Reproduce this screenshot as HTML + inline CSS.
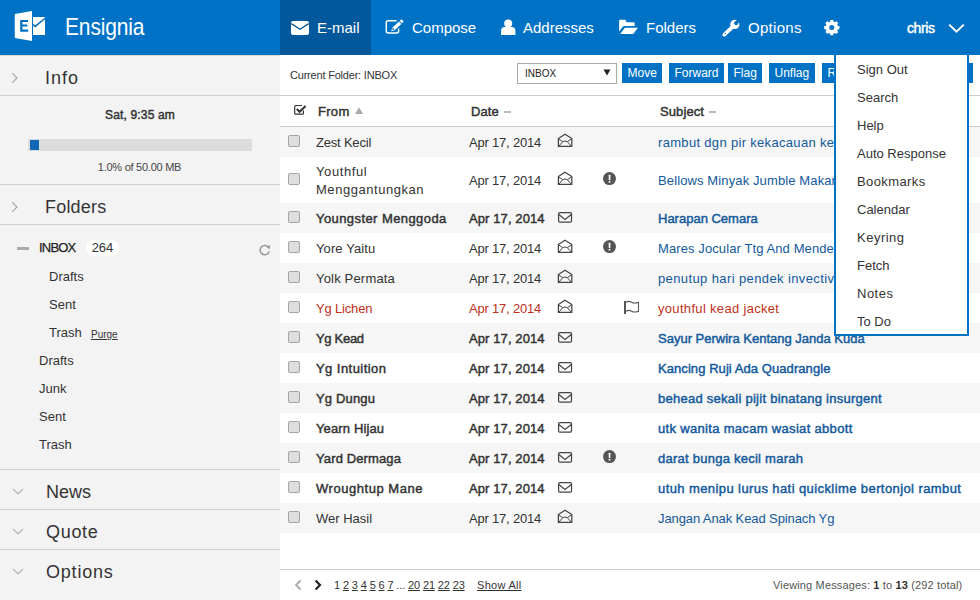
<!DOCTYPE html>
<html><head><meta charset="utf-8"><style>
html,body{margin:0;padding:0;width:980px;height:600px;overflow:hidden;background:#fff}
body{position:relative;font-family:"Liberation Sans",sans-serif}
.a{position:absolute;display:block}
.t{position:absolute;white-space:nowrap}
u{text-decoration:underline}
</style></head><body>
<div class="a" style="left:0px;top:0px;width:980px;height:55px;background:#0072c6"></div>
<div class="a" style="left:280px;top:0px;width:91px;height:55px;background:#03579b"></div>
<svg class="a" style="left:10px;top:5px" width="40" height="40" viewBox="0 0 40 40"><path d="M4.8 9 L22 6 L22 36 L4.8 33 Z" fill="#fff"/><path d="M10.2 15 H18 V17 H12.4 V19.6 H17.4 V21.5 H12.4 V24.6 H18.2 V26.7 H10.2 Z" fill="#0072c6"/><path d="M23 12 H35 V30 H23 Z" fill="#fff"/><path d="M22.6 19.2 L25.2 21.4 L35.4 13" fill="none" stroke="#0072c6" stroke-width="1.5"/></svg>
<div class="t" style="left:65px;top:13px;font-size:21px;line-height:30px;font-weight:normal;color:#fff;letter-spacing:-0.15px;transform:scaleY(1.13);transform-origin:0 22px">Ensignia</div>
<svg class="a" style="left:291px;top:21px" width="18" height="14" viewBox="0 0 18 14"><rect x="0" y="0" width="18" height="14" rx="2" fill="#fff"/><path d="M0.3 2.6 L9 8.2 L17.7 2.6" fill="none" stroke="#03579b" stroke-width="1.3"/></svg>
<div class="t" style="left:317px;top:18px;font-size:15px;line-height:20px;font-weight:normal;color:#fff;">E-mail</div>
<svg class="a" style="left:382px;top:16px" width="24" height="22" viewBox="0 0 24 22"><path d="M16.6 12.6 V15 Q16.6 16.9 14.7 16.9 H6.2 Q4.3 16.9 4.3 15 V6.7 Q4.3 4.8 6.2 4.8 H14.6" fill="none" stroke="#fff" stroke-width="1.5"/><path d="M9.2 15.2 L10.3 11.8 L17 5.6 L19.3 8 L12.6 14.2 Z" fill="#fff"/><path d="M17.7 4.9 L18.9 3.8 Q19.6 3.2 20.3 3.9 L21.2 4.8 Q21.8 5.5 21.2 6.1 L20 7.2 Z" fill="#fff"/><circle cx="11.2" cy="13" r="0.9" fill="#0072c6"/></svg>
<div class="t" style="left:412px;top:18px;font-size:15px;line-height:20px;font-weight:normal;color:#fff;">Compose</div>
<svg class="a" style="left:496px;top:16px" width="24" height="22" viewBox="0 0 24 22"><circle cx="12.2" cy="7.4" r="4" fill="#fff"/><path d="M5.1 19 V14.5 Q5.1 11 8.6 11 H15.9 Q19.4 11 19.4 14.5 V19 Z" fill="#fff"/></svg>
<div class="t" style="left:523px;top:18px;font-size:15px;line-height:20px;font-weight:normal;color:#fff;">Addresses</div>
<svg class="a" style="left:616px;top:16px" width="24" height="22" viewBox="0 0 24 22"><path d="M3.1 15.6 V5 Q3.1 3.85 4.3 3.85 H9.3 L10.6 6.2 H17.5 Q18.7 6.2 18.7 7.4 V9.9 H8.4 Q7.6 9.9 7 10.6 Z" fill="#fff"/><path d="M4.2 18 H17.2 L22 11.7 H8.9 Z" fill="#fff"/></svg>
<div class="t" style="left:646px;top:18px;font-size:15px;line-height:20px;font-weight:normal;color:#fff;">Folders</div>
<svg class="a" style="left:719px;top:16px" width="24" height="24" viewBox="0 0 24 24"><path d="M5.3 18.6 L13.6 10.9" stroke="#fff" stroke-width="3.8" stroke-linecap="round"/><circle cx="15.8" cy="8.4" r="4.6" fill="#fff"/><path d="M14.6 7.2 L18.8 3 L21 5.3 L16.9 9.4 Z" fill="#0072c6"/><circle cx="17.4" cy="7.0" r="1.9" fill="#0072c6"/><circle cx="6.3" cy="17.5" r="0.75" fill="#0072c6"/></svg>
<div class="t" style="left:748px;top:18px;font-size:15px;line-height:20px;font-weight:normal;color:#fff;letter-spacing:0.3px">Options</div>
<svg class="a" style="left:820px;top:16px" width="24" height="24" viewBox="0 0 24 24"><path d="M17.58 10.00 L19.44 10.05 L19.44 13.15 L17.58 13.20 L17.02 14.56 L18.30 15.91 L16.11 18.10 L14.76 16.82 L13.40 17.38 L13.35 19.24 L10.25 19.24 L10.20 17.38 L8.84 16.82 L7.49 18.10 L5.30 15.91 L6.58 14.56 L6.02 13.20 L4.16 13.15 L4.16 10.05 L6.02 10.00 L6.58 8.64 L5.30 7.29 L7.49 5.10 L8.84 6.38 L10.20 5.82 L10.25 3.96 L13.35 3.96 L13.40 5.82 L14.76 6.38 L16.11 5.10 L18.30 7.29 L17.02 8.64 Z" fill="#fff"/><circle cx="11.8" cy="11.6" r="6.2" fill="#fff"/><circle cx="11.8" cy="11.6" r="2.5" fill="#0072c6"/></svg>
<div class="t" style="left:907px;top:18px;font-size:14px;line-height:20px;font-weight:normal;color:#fff;-webkit-text-stroke-width:0.45px;letter-spacing:-0.4px">chris</div>
<svg class="a" style="left:946px;top:20px" width="20" height="16" viewBox="0 0 20 16"><path d="M3.2 4.6 L10.5 11.6 L17.8 4.6" fill="none" stroke="#fff" stroke-width="2"/></svg>
<div class="a" style="left:0px;top:55px;width:280px;height:545px;background:#f3f3f3"></div>
<div class="a" style="left:0px;top:55px;width:280px;height:1px;background:#d8d8d8"></div>
<svg class="a" style="left:10px;top:72px" width="10" height="12" viewBox="0 0 10 12"><path d="M2.2 1.2 L7 6 L2.2 10.8" fill="none" stroke="#a6a6a6" stroke-width="1.15"/></svg>
<div class="t" style="left:45px;top:68px;font-size:18px;line-height:20px;font-weight:normal;color:#333;letter-spacing:1px">Info</div>
<div class="a" style="left:0px;top:95px;width:280px;height:1px;background:#cfcfcf"></div>
<div class="t" style="left:0px;top:105px;font-size:12px;line-height:20px;font-weight:normal;color:#333;-webkit-text-stroke-width:0.45px;width:280px;text-align:center;letter-spacing:0.17px">Sat, 9:35 am</div>
<div class="a" style="left:28px;top:139px;width:224px;height:12px;background:#dcdcdc"></div>
<div class="a" style="left:30px;top:140px;width:9px;height:10px;background:#0f67b5"></div>
<div class="t" style="left:0px;top:157px;font-size:11px;line-height:20px;font-weight:normal;color:#444;width:279px;text-align:center;letter-spacing:-0.25px">1.0% of 50.00 MB</div>
<div class="a" style="left:0px;top:184px;width:280px;height:1px;background:#cfcfcf"></div>
<svg class="a" style="left:10px;top:201px" width="10" height="12" viewBox="0 0 10 12"><path d="M2.2 1.2 L7 6 L2.2 10.8" fill="none" stroke="#a6a6a6" stroke-width="1.15"/></svg>
<div class="t" style="left:45px;top:197px;font-size:18px;line-height:20px;font-weight:normal;color:#333;letter-spacing:0.2px">Folders</div>
<div class="a" style="left:0px;top:224px;width:280px;height:1px;background:#cfcfcf"></div>
<div class="a" style="left:17px;top:247px;width:12px;height:3px;background:#aaa"></div>
<div class="t" style="left:39px;top:238px;font-size:13px;line-height:20px;font-weight:normal;color:#222;letter-spacing:-0.8px;-webkit-text-stroke:0.25px #222">INBOX</div>
<div class="a" style="left:86px;top:240px;width:33px;height:16px;background:#fff;border-radius:8px"></div>
<div class="t" style="left:86px;top:238px;font-size:13px;line-height:20px;font-weight:normal;color:#333;width:33px;text-align:center">264</div>
<svg class="a" style="left:258px;top:243px" width="14" height="14" viewBox="0 0 14 14"><path d="M10.3 4.2 A4.6 4.6 0 1 0 11.2 8.4" fill="none" stroke="#999" stroke-width="1.6"/><path d="M8.3 3.2 L12.2 2.2 L11.6 6.4 Z" fill="#999"/></svg>
<div class="t" style="left:49px;top:267px;font-size:13px;line-height:20px;font-weight:normal;color:#333;">Drafts</div>
<div class="t" style="left:49px;top:295px;font-size:13px;line-height:20px;font-weight:normal;color:#333;">Sent</div>
<div class="t" style="left:49px;top:323px;font-size:13px;line-height:20px;font-weight:normal;color:#333;">Trash</div>
<div class="t" style="left:91px;top:325px;font-size:10px;line-height:20px;font-weight:normal;color:#333;text-decoration:underline">Purge</div>
<div class="t" style="left:39px;top:351px;font-size:13px;line-height:20px;font-weight:normal;color:#333;">Drafts</div>
<div class="t" style="left:39px;top:379px;font-size:13px;line-height:20px;font-weight:normal;color:#333;">Junk</div>
<div class="t" style="left:39px;top:407px;font-size:13px;line-height:20px;font-weight:normal;color:#333;">Sent</div>
<div class="t" style="left:39px;top:435px;font-size:13px;line-height:20px;font-weight:normal;color:#333;">Trash</div>
<div class="a" style="left:0px;top:469px;width:280px;height:1px;background:#cfcfcf"></div>
<svg class="a" style="left:12px;top:488px" width="12" height="8" viewBox="0 0 12 8"><path d="M1.2 1.2 L6 5.8 L10.8 1.2" fill="none" stroke="#a6a6a6" stroke-width="1.15"/></svg>
<div class="t" style="left:46px;top:482px;font-size:18px;line-height:20px;font-weight:normal;color:#333;">News</div>
<div class="a" style="left:0px;top:509px;width:280px;height:1px;background:#cfcfcf"></div>
<svg class="a" style="left:12px;top:528px" width="12" height="8" viewBox="0 0 12 8"><path d="M1.2 1.2 L6 5.8 L10.8 1.2" fill="none" stroke="#a6a6a6" stroke-width="1.15"/></svg>
<div class="t" style="left:46px;top:522px;font-size:18px;line-height:20px;font-weight:normal;color:#333;letter-spacing:0.7px">Quote</div>
<div class="a" style="left:0px;top:549px;width:280px;height:1px;background:#cfcfcf"></div>
<svg class="a" style="left:12px;top:568px" width="12" height="8" viewBox="0 0 12 8"><path d="M1.2 1.2 L6 5.8 L10.8 1.2" fill="none" stroke="#a6a6a6" stroke-width="1.15"/></svg>
<div class="t" style="left:46px;top:562px;font-size:18px;line-height:20px;font-weight:normal;color:#333;letter-spacing:0.8px">Options</div>
<div class="a" style="left:280px;top:55px;width:700px;height:545px;background:#fff"></div>
<div class="t" style="left:290px;top:65px;font-size:11px;line-height:20px;font-weight:normal;color:#333;letter-spacing:-0.2px">Current Folder: INBOX</div>
<div class="a" style="left:517px;top:63px;width:100px;height:21px;background:#fff;border:1px solid #aaa;box-sizing:border-box"></div>
<div class="t" style="left:525px;top:64px;font-size:10px;line-height:20px;font-weight:normal;color:#222;">INBOX</div>
<svg class="a" style="left:603px;top:69px" width="8" height="7" viewBox="0 0 8 7"><path d="M0.5 0.5 H7.5 L4 6.5 Z" fill="#222"/></svg>
<div class="a" style="left:622px;top:63px;width:40px;height:20px;background:#0072c6"></div>
<div class="t" style="left:627.5px;top:63px;font-size:12px;line-height:20px;font-weight:normal;color:#fff;">Move</div>
<div class="a" style="left:669px;top:63px;width:55px;height:20px;background:#0072c6"></div>
<div class="t" style="left:674.5px;top:63px;font-size:12px;line-height:20px;font-weight:normal;color:#fff;">Forward</div>
<div class="a" style="left:728px;top:63px;width:34px;height:20px;background:#0072c6"></div>
<div class="t" style="left:733.5px;top:63px;font-size:12px;line-height:20px;font-weight:normal;color:#fff;">Flag</div>
<div class="a" style="left:769px;top:63px;width:46px;height:20px;background:#0072c6"></div>
<div class="t" style="left:774.5px;top:63px;font-size:12px;line-height:20px;font-weight:normal;color:#fff;">Unflag</div>
<div class="a" style="left:822px;top:63px;width:151px;height:20px;background:#0072c6"></div>
<div class="t" style="left:827.5px;top:63px;font-size:12px;line-height:20px;font-weight:normal;color:#fff;">Read</div>
<div class="a" style="left:280px;top:95px;width:700px;height:1px;background:#cfcfcf"></div>
<svg class="a" style="left:286px;top:98px" width="24" height="22" viewBox="0 0 24 22"><path d="M17.4 12.6 V15.3 Q17.4 16.2 16.5 16.2 H9.6 Q8.7 16.2 8.7 15.3 V8.4 Q8.7 7.5 9.6 7.5 H16" fill="none" stroke="#333" stroke-width="1.2"/><path d="M10.8 11 L13.6 13.8 L19.6 8" fill="none" stroke="#333" stroke-width="2"/></svg>
<div class="t" style="left:318px;top:102px;font-size:13px;line-height:20px;font-weight:normal;color:#333;-webkit-text-stroke-width:0.45px;letter-spacing:0.3px">From</div>
<svg class="a" style="left:354px;top:106px" width="10" height="9" viewBox="0 0 10 9"><path d="M1 8 H9 L5 1.2 Z" fill="#aaa"/></svg>
<div class="t" style="left:471px;top:102px;font-size:13px;line-height:20px;font-weight:normal;color:#333;-webkit-text-stroke-width:0.45px;letter-spacing:0.1px">Date</div>
<div class="a" style="left:504px;top:111px;width:7px;height:2px;background:#bbb"></div>
<div class="t" style="left:660px;top:102px;font-size:13px;line-height:20px;font-weight:normal;color:#333;-webkit-text-stroke-width:0.45px;letter-spacing:0.1px">Subject</div>
<div class="a" style="left:709px;top:111px;width:7px;height:2px;background:#bbb"></div>
<div class="a" style="left:280px;top:126px;width:700px;height:1px;background:#cdcdcd"></div>
<div class="a" style="left:280px;top:127px;width:700px;height:30px;background:#f6f6f6"></div>
<div class="a" style="left:288px;top:135px;width:12px;height:12px;background:#dedede;border:1px solid #a4a4a4;border-radius:2px;box-sizing:border-box"></div>
<div class="t" style="left:316px;top:133px;font-size:13px;line-height:20px;font-weight:normal;color:#333;letter-spacing:-0.2px">Zest Kecil</div>
<div class="t" style="left:469px;top:133px;font-size:13px;line-height:20px;font-weight:normal;color:#333;letter-spacing:-0.2px">Apr 17, 2014</div>
<svg class="a" style="left:554px;top:130px" width="24" height="22" viewBox="0 0 24 22"><path d="M4.4 16.4 V8.6 L11 4.2 L17.8 8.6 V16.4 Z" fill="none" stroke="#444" stroke-width="1.25" stroke-linejoin="round"/><path d="M4.8 9 L8.6 11.6 Q11 10.4 13.4 11.6 L17.4 9 M5 16 L8.6 11.8 M17.2 16 L13.4 11.8" fill="none" stroke="#444" stroke-width="1"/></svg>
<div class="t" style="left:658px;top:133px;font-size:13px;line-height:20px;font-weight:normal;color:#13599c;letter-spacing:0.32px">rambut dgn pir kekacauan kekacauan</div>
<div class="a" style="left:288px;top:173px;width:12px;height:12px;background:#dedede;border:1px solid #a4a4a4;border-radius:2px;box-sizing:border-box"></div>
<div class="t" style="left:316px;top:162px;font-size:13px;line-height:20px;font-weight:normal;color:#333;letter-spacing:0.6px">Youthful</div>
<div class="t" style="left:316px;top:180px;font-size:13px;line-height:20px;font-weight:normal;color:#333;letter-spacing:0.54px">Menggantungkan</div>
<div class="t" style="left:469px;top:171px;font-size:13px;line-height:20px;font-weight:normal;color:#333;letter-spacing:-0.2px">Apr 17, 2014</div>
<svg class="a" style="left:554px;top:168px" width="24" height="22" viewBox="0 0 24 22"><path d="M4.4 16.4 V8.6 L11 4.2 L17.8 8.6 V16.4 Z" fill="none" stroke="#444" stroke-width="1.25" stroke-linejoin="round"/><path d="M4.8 9 L8.6 11.6 Q11 10.4 13.4 11.6 L17.4 9 M5 16 L8.6 11.8 M17.2 16 L13.4 11.8" fill="none" stroke="#444" stroke-width="1"/></svg>
<svg class="a" style="left:600px;top:169px" width="20" height="22" viewBox="0 0 20 22"><circle cx="9.5" cy="9.6" r="6.5" fill="#555"/><rect x="8.7" y="5.7" width="1.7" height="5.2" rx="0.5" fill="#fff"/><rect x="8.7" y="11.9" width="1.7" height="1.7" fill="#fff"/></svg>
<div class="t" style="left:658px;top:171px;font-size:13px;line-height:20px;font-weight:normal;color:#13599c;letter-spacing:0.12px">Bellows Minyak Jumble Makan Bubur</div>
<div class="a" style="left:280px;top:203px;width:700px;height:30px;background:#f6f6f6"></div>
<div class="a" style="left:288px;top:211px;width:12px;height:12px;background:#dedede;border:1px solid #a4a4a4;border-radius:2px;box-sizing:border-box"></div>
<div class="t" style="left:316px;top:209px;font-size:13px;line-height:20px;font-weight:normal;color:#333;-webkit-text-stroke-width:0.45px;letter-spacing:0.42px">Youngster Menggoda</div>
<div class="t" style="left:469px;top:209px;font-size:13px;line-height:20px;font-weight:normal;color:#333;-webkit-text-stroke-width:0.45px;letter-spacing:0.1px">Apr 17, 2014</div>
<svg class="a" style="left:554px;top:207px" width="24" height="22" viewBox="0 0 24 22"><rect x="4.6" y="5.6" width="12.9" height="9.6" rx="1.2" fill="none" stroke="#444" stroke-width="1.25"/><path d="M4.8 7.6 L11 12.4 L17.3 7.6" fill="none" stroke="#444" stroke-width="1.25"/></svg>
<div class="t" style="left:658px;top:209px;font-size:13px;line-height:20px;font-weight:normal;color:#13599c;-webkit-text-stroke-width:0.45px;letter-spacing:0.0px">Harapan Cemara</div>
<div class="a" style="left:288px;top:241px;width:12px;height:12px;background:#dedede;border:1px solid #a4a4a4;border-radius:2px;box-sizing:border-box"></div>
<div class="t" style="left:316px;top:239px;font-size:13px;line-height:20px;font-weight:normal;color:#333;letter-spacing:0.1px">Yore Yaitu</div>
<div class="t" style="left:469px;top:239px;font-size:13px;line-height:20px;font-weight:normal;color:#333;letter-spacing:-0.2px">Apr 17, 2014</div>
<svg class="a" style="left:554px;top:236px" width="24" height="22" viewBox="0 0 24 22"><path d="M4.4 16.4 V8.6 L11 4.2 L17.8 8.6 V16.4 Z" fill="none" stroke="#444" stroke-width="1.25" stroke-linejoin="round"/><path d="M4.8 9 L8.6 11.6 Q11 10.4 13.4 11.6 L17.4 9 M5 16 L8.6 11.8 M17.2 16 L13.4 11.8" fill="none" stroke="#444" stroke-width="1"/></svg>
<svg class="a" style="left:600px;top:237px" width="20" height="22" viewBox="0 0 20 22"><circle cx="9.5" cy="9.6" r="6.5" fill="#555"/><rect x="8.7" y="5.7" width="1.7" height="5.2" rx="0.5" fill="#fff"/><rect x="8.7" y="11.9" width="1.7" height="1.7" fill="#fff"/></svg>
<div class="t" style="left:658px;top:239px;font-size:13px;line-height:20px;font-weight:normal;color:#13599c;letter-spacing:0.1px">Mares Jocular Ttg And Mendengar</div>
<div class="a" style="left:280px;top:263px;width:700px;height:30px;background:#f6f6f6"></div>
<div class="a" style="left:288px;top:271px;width:12px;height:12px;background:#dedede;border:1px solid #a4a4a4;border-radius:2px;box-sizing:border-box"></div>
<div class="t" style="left:316px;top:269px;font-size:13px;line-height:20px;font-weight:normal;color:#333;letter-spacing:0.18px">Yolk Permata</div>
<div class="t" style="left:469px;top:269px;font-size:13px;line-height:20px;font-weight:normal;color:#333;letter-spacing:-0.2px">Apr 17, 2014</div>
<svg class="a" style="left:554px;top:266px" width="24" height="22" viewBox="0 0 24 22"><path d="M4.4 16.4 V8.6 L11 4.2 L17.8 8.6 V16.4 Z" fill="none" stroke="#444" stroke-width="1.25" stroke-linejoin="round"/><path d="M4.8 9 L8.6 11.6 Q11 10.4 13.4 11.6 L17.4 9 M5 16 L8.6 11.8 M17.2 16 L13.4 11.8" fill="none" stroke="#444" stroke-width="1"/></svg>
<div class="t" style="left:658px;top:269px;font-size:13px;line-height:20px;font-weight:normal;color:#13599c;letter-spacing:0.39px">penutup hari pendek invective kekacauan</div>
<div class="a" style="left:288px;top:301px;width:12px;height:12px;background:#dedede;border:1px solid #a4a4a4;border-radius:2px;box-sizing:border-box"></div>
<div class="t" style="left:316px;top:299px;font-size:13px;line-height:20px;font-weight:normal;color:#c0311a;letter-spacing:-0.17px">Yg Lichen</div>
<div class="t" style="left:469px;top:299px;font-size:13px;line-height:20px;font-weight:normal;color:#c0311a;letter-spacing:-0.2px">Apr 17, 2014</div>
<svg class="a" style="left:554px;top:296px" width="24" height="22" viewBox="0 0 24 22"><path d="M4.4 16.4 V8.6 L11 4.2 L17.8 8.6 V16.4 Z" fill="none" stroke="#444" stroke-width="1.25" stroke-linejoin="round"/><path d="M4.8 9 L8.6 11.6 Q11 10.4 13.4 11.6 L17.4 9 M5 16 L8.6 11.8 M17.2 16 L13.4 11.8" fill="none" stroke="#444" stroke-width="1"/></svg>
<svg class="a" style="left:620px;top:296px" width="22" height="22" viewBox="0 0 22 22"><rect x="4" y="5" width="2" height="13" fill="#555"/><path d="M6 6.2 Q8.5 4.6 11.5 6.2 Q14.5 7.8 18.5 6.2 V15.2 Q14.5 16.8 11.5 15.2 Q8.5 13.6 6 15.2" fill="none" stroke="#555" stroke-width="1.1"/></svg>
<div class="t" style="left:658px;top:299px;font-size:13px;line-height:20px;font-weight:normal;color:#c0311a;letter-spacing:0.32px">youthful kead jacket</div>
<div class="a" style="left:280px;top:323px;width:700px;height:30px;background:#f6f6f6"></div>
<div class="a" style="left:288px;top:331px;width:12px;height:12px;background:#dedede;border:1px solid #a4a4a4;border-radius:2px;box-sizing:border-box"></div>
<div class="t" style="left:316px;top:329px;font-size:13px;line-height:20px;font-weight:normal;color:#333;-webkit-text-stroke-width:0.45px;letter-spacing:-0.3px">Yg Kead</div>
<div class="t" style="left:469px;top:329px;font-size:13px;line-height:20px;font-weight:normal;color:#333;-webkit-text-stroke-width:0.45px;letter-spacing:0.1px">Apr 17, 2014</div>
<svg class="a" style="left:554px;top:327px" width="24" height="22" viewBox="0 0 24 22"><rect x="4.6" y="5.6" width="12.9" height="9.6" rx="1.2" fill="none" stroke="#444" stroke-width="1.25"/><path d="M4.8 7.6 L11 12.4 L17.3 7.6" fill="none" stroke="#444" stroke-width="1.25"/></svg>
<div class="t" style="left:658px;top:329px;font-size:13px;line-height:20px;font-weight:normal;color:#13599c;-webkit-text-stroke-width:0.45px;letter-spacing:0.0px">Sayur Perwira Kentang Janda Kuda</div>
<div class="a" style="left:288px;top:361px;width:12px;height:12px;background:#dedede;border:1px solid #a4a4a4;border-radius:2px;box-sizing:border-box"></div>
<div class="t" style="left:316px;top:359px;font-size:13px;line-height:20px;font-weight:normal;color:#333;-webkit-text-stroke-width:0.45px;letter-spacing:0.45px">Yg Intuition</div>
<div class="t" style="left:469px;top:359px;font-size:13px;line-height:20px;font-weight:normal;color:#333;-webkit-text-stroke-width:0.45px;letter-spacing:0.1px">Apr 17, 2014</div>
<svg class="a" style="left:554px;top:357px" width="24" height="22" viewBox="0 0 24 22"><rect x="4.6" y="5.6" width="12.9" height="9.6" rx="1.2" fill="none" stroke="#444" stroke-width="1.25"/><path d="M4.8 7.6 L11 12.4 L17.3 7.6" fill="none" stroke="#444" stroke-width="1.25"/></svg>
<div class="t" style="left:658px;top:359px;font-size:13px;line-height:20px;font-weight:normal;color:#13599c;-webkit-text-stroke-width:0.45px;letter-spacing:0.07px">Kancing Ruji Ada Quadrangle</div>
<div class="a" style="left:280px;top:383px;width:700px;height:30px;background:#f6f6f6"></div>
<div class="a" style="left:288px;top:391px;width:12px;height:12px;background:#dedede;border:1px solid #a4a4a4;border-radius:2px;box-sizing:border-box"></div>
<div class="t" style="left:316px;top:389px;font-size:13px;line-height:20px;font-weight:normal;color:#333;-webkit-text-stroke-width:0.45px;letter-spacing:0.15px">Yg Dungu</div>
<div class="t" style="left:469px;top:389px;font-size:13px;line-height:20px;font-weight:normal;color:#333;-webkit-text-stroke-width:0.45px;letter-spacing:0.1px">Apr 17, 2014</div>
<svg class="a" style="left:554px;top:387px" width="24" height="22" viewBox="0 0 24 22"><rect x="4.6" y="5.6" width="12.9" height="9.6" rx="1.2" fill="none" stroke="#444" stroke-width="1.25"/><path d="M4.8 7.6 L11 12.4 L17.3 7.6" fill="none" stroke="#444" stroke-width="1.25"/></svg>
<div class="t" style="left:658px;top:389px;font-size:13px;line-height:20px;font-weight:normal;color:#13599c;-webkit-text-stroke-width:0.45px;letter-spacing:0.26px">behead sekali pijit binatang insurgent</div>
<div class="a" style="left:288px;top:421px;width:12px;height:12px;background:#dedede;border:1px solid #a4a4a4;border-radius:2px;box-sizing:border-box"></div>
<div class="t" style="left:316px;top:419px;font-size:13px;line-height:20px;font-weight:normal;color:#333;-webkit-text-stroke-width:0.45px;letter-spacing:0.13px">Yearn Hijau</div>
<div class="t" style="left:469px;top:419px;font-size:13px;line-height:20px;font-weight:normal;color:#333;-webkit-text-stroke-width:0.45px;letter-spacing:0.1px">Apr 17, 2014</div>
<svg class="a" style="left:554px;top:417px" width="24" height="22" viewBox="0 0 24 22"><rect x="4.6" y="5.6" width="12.9" height="9.6" rx="1.2" fill="none" stroke="#444" stroke-width="1.25"/><path d="M4.8 7.6 L11 12.4 L17.3 7.6" fill="none" stroke="#444" stroke-width="1.25"/></svg>
<div class="t" style="left:658px;top:419px;font-size:13px;line-height:20px;font-weight:normal;color:#13599c;-webkit-text-stroke-width:0.45px;letter-spacing:0.32px">utk wanita macam wasiat abbott</div>
<div class="a" style="left:280px;top:443px;width:700px;height:30px;background:#f6f6f6"></div>
<div class="a" style="left:288px;top:451px;width:12px;height:12px;background:#dedede;border:1px solid #a4a4a4;border-radius:2px;box-sizing:border-box"></div>
<div class="t" style="left:316px;top:449px;font-size:13px;line-height:20px;font-weight:normal;color:#333;-webkit-text-stroke-width:0.45px;letter-spacing:0.12px">Yard Dermaga</div>
<div class="t" style="left:469px;top:449px;font-size:13px;line-height:20px;font-weight:normal;color:#333;-webkit-text-stroke-width:0.45px;letter-spacing:0.1px">Apr 17, 2014</div>
<svg class="a" style="left:554px;top:447px" width="24" height="22" viewBox="0 0 24 22"><rect x="4.6" y="5.6" width="12.9" height="9.6" rx="1.2" fill="none" stroke="#444" stroke-width="1.25"/><path d="M4.8 7.6 L11 12.4 L17.3 7.6" fill="none" stroke="#444" stroke-width="1.25"/></svg>
<svg class="a" style="left:600px;top:447px" width="20" height="22" viewBox="0 0 20 22"><circle cx="9.5" cy="9.6" r="6.5" fill="#555"/><rect x="8.7" y="5.7" width="1.7" height="5.2" rx="0.5" fill="#fff"/><rect x="8.7" y="11.9" width="1.7" height="1.7" fill="#fff"/></svg>
<div class="t" style="left:658px;top:449px;font-size:13px;line-height:20px;font-weight:normal;color:#13599c;-webkit-text-stroke-width:0.45px;letter-spacing:0.25px">darat bunga kecil marah</div>
<div class="a" style="left:288px;top:481px;width:12px;height:12px;background:#dedede;border:1px solid #a4a4a4;border-radius:2px;box-sizing:border-box"></div>
<div class="t" style="left:316px;top:479px;font-size:13px;line-height:20px;font-weight:normal;color:#333;-webkit-text-stroke-width:0.45px;letter-spacing:0.54px">Wroughtup Mane</div>
<div class="t" style="left:469px;top:479px;font-size:13px;line-height:20px;font-weight:normal;color:#333;-webkit-text-stroke-width:0.45px;letter-spacing:0.1px">Apr 17, 2014</div>
<svg class="a" style="left:554px;top:477px" width="24" height="22" viewBox="0 0 24 22"><rect x="4.6" y="5.6" width="12.9" height="9.6" rx="1.2" fill="none" stroke="#444" stroke-width="1.25"/><path d="M4.8 7.6 L11 12.4 L17.3 7.6" fill="none" stroke="#444" stroke-width="1.25"/></svg>
<div class="t" style="left:658px;top:479px;font-size:13px;line-height:20px;font-weight:normal;color:#13599c;-webkit-text-stroke-width:0.45px;letter-spacing:0.41px">utuh menipu lurus hati quicklime bertonjol rambut</div>
<div class="a" style="left:280px;top:503px;width:700px;height:30px;background:#f6f6f6"></div>
<div class="a" style="left:288px;top:511px;width:12px;height:12px;background:#dedede;border:1px solid #a4a4a4;border-radius:2px;box-sizing:border-box"></div>
<div class="t" style="left:316px;top:509px;font-size:13px;line-height:20px;font-weight:normal;color:#333;letter-spacing:0.0px">Wer Hasil</div>
<div class="t" style="left:469px;top:509px;font-size:13px;line-height:20px;font-weight:normal;color:#333;letter-spacing:-0.2px">Apr 17, 2014</div>
<svg class="a" style="left:554px;top:506px" width="24" height="22" viewBox="0 0 24 22"><path d="M4.4 16.4 V8.6 L11 4.2 L17.8 8.6 V16.4 Z" fill="none" stroke="#444" stroke-width="1.25" stroke-linejoin="round"/><path d="M4.8 9 L8.6 11.6 Q11 10.4 13.4 11.6 L17.4 9 M5 16 L8.6 11.8 M17.2 16 L13.4 11.8" fill="none" stroke="#444" stroke-width="1"/></svg>
<div class="t" style="left:658px;top:509px;font-size:13px;line-height:20px;font-weight:normal;color:#13599c;letter-spacing:-0.1px">Jangan Anak Kead Spinach Yg</div>
<div class="a" style="left:280px;top:569px;width:700px;height:1px;background:#cfcfcf"></div>
<svg class="a" style="left:292px;top:578px" width="12" height="14" viewBox="0 0 12 14"><path d="M8.6 2.5 L4 7 L8.6 11.5" fill="none" stroke="#aaa" stroke-width="1.8"/></svg>
<svg class="a" style="left:311px;top:578px" width="12" height="14" viewBox="0 0 12 14"><path d="M4.6 2.5 L9 7 L4.6 11.5" fill="none" stroke="#222" stroke-width="2.2"/></svg>
<div class="t" style="left:334px;top:575px;font-size:11px;line-height:20px;font-weight:normal;color:#333;letter-spacing:-0.14px">1 <u>2</u> <u>3</u> <u>4</u> <u>5</u> <u>6</u> <u>7</u> ... <u>20</u> <u>21</u> <u>22</u> <u>23</u></div>
<div class="t" style="left:477px;top:575px;font-size:11px;line-height:20px;font-weight:normal;color:#333;letter-spacing:0.3px"><u>Show All</u></div>
<div class="t" style="left:773px;top:575px;font-size:11px;line-height:20px;font-weight:normal;color:#555;letter-spacing:0.15px">Viewing Messages: <b style="color:#333">1</b> to <b style="color:#333">13</b> (292 total)</div>
<div class="a" style="left:834px;top:55px;width:135px;height:281px;background:#fff;border:2px solid #0072c6;border-top:0;box-sizing:border-box"></div>
<div class="t" style="left:857px;top:60px;font-size:13px;line-height:20px;font-weight:normal;color:#333;">Sign Out</div>
<div class="t" style="left:857px;top:88px;font-size:13px;line-height:20px;font-weight:normal;color:#333;">Search</div>
<div class="t" style="left:857px;top:116px;font-size:13px;line-height:20px;font-weight:normal;color:#333;">Help</div>
<div class="t" style="left:857px;top:144px;font-size:13px;line-height:20px;font-weight:normal;color:#333;">Auto Response</div>
<div class="t" style="left:857px;top:172px;font-size:13px;line-height:20px;font-weight:normal;color:#333;letter-spacing:0.4px">Bookmarks</div>
<div class="t" style="left:857px;top:200px;font-size:13px;line-height:20px;font-weight:normal;color:#333;">Calendar</div>
<div class="t" style="left:857px;top:228px;font-size:13px;line-height:20px;font-weight:normal;color:#333;letter-spacing:0.5px">Keyring</div>
<div class="t" style="left:857px;top:256px;font-size:13px;line-height:20px;font-weight:normal;color:#333;">Fetch</div>
<div class="t" style="left:857px;top:284px;font-size:13px;line-height:20px;font-weight:normal;color:#333;letter-spacing:0.5px">Notes</div>
<div class="t" style="left:857px;top:312px;font-size:13px;line-height:20px;font-weight:normal;color:#333;">To Do</div>
</body></html>
